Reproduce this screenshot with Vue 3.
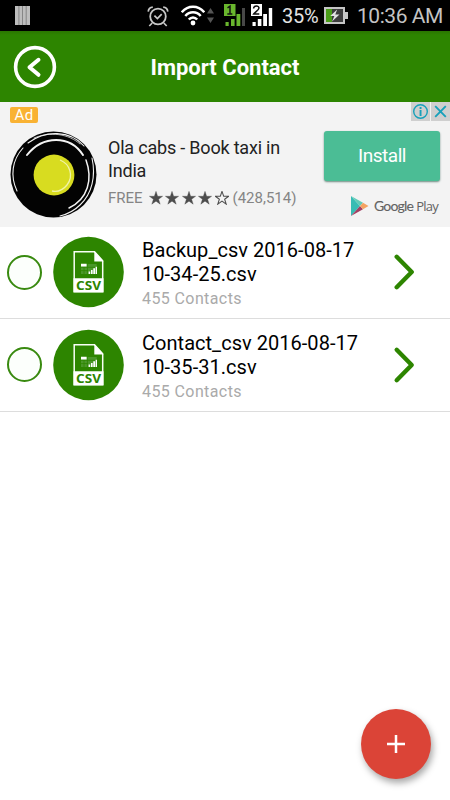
<script setup>
const files = [
  { name: ['Backup_csv 2016-08-17', '10-34-25.csv'], count: '455 Contacts' },
  { name: ['Contact_csv 2016-08-17', '10-35-31.csv'], count: '455 Contacts' }
]
const star = 'M8 .4 9.9 6h5.7l-4.6 3.4 1.8 5.6L8 11.6 3.2 15 5 9.4.4 6h5.7z'
</script>

<template>
  <div class="screen">
    <div class="status">
      <svg class="bars" width="15" height="19" viewBox="0 0 15 19">
        <path fill="#bdbdbd" d="M0 0h15v19H0z" />
        <path stroke="#777" stroke-width=".8" d="M3.9 0v19M7.5 0v19M11.2 0v19" />
      </svg>
      <svg class="alarm" width="22" height="21" viewBox="0 0 22 21" fill="none" stroke="#c6c6c6">
        <circle cx="11" cy="10.5" r="7.8" stroke-width="1.8" />
        <path stroke-width="1.7" d="m7.4 9.6 3 3 4.3-4.4M1.2 5.6C1.5 3 3.2 1.4 5.8 1.2M20.8 5.6C20.5 3 18.8 1.4 16.2 1.2M5.2 17 2.3 20M16.8 17l2.9 3" />
      </svg>
      <svg class="wifi" width="24" height="21" viewBox="0 0 24 21" fill="none" stroke="#fff" stroke-width="2.5">
        <path d="M.8 7.3C7-.1 17-.1 23.2 7.3M4.3 11c4.3-5 11.1-5 15.4 0M7.8 14.5c2.4-2.8 6-2.8 8.4 0" />
        <circle cx="12" cy="18" r="2.4" fill="#fff" stroke="none" />
      </svg>
      <svg class="updown" width="7" height="15" viewBox="0 0 7 15" fill="#555">
        <path d="M0 5.5 3.5 0 7 5.5zM0 9.5h7L3.5 15z" />
      </svg>
      <svg class="sim" width="22" height="23" viewBox="0 0 22 23">
        <path fill="#69b62d" d="M0 0h11.5v12H0zM1.5 18h3.2v4H1.5zM7 15h3.6v7H7zM12.5 10h3.8v12h-3.8z" />
        <path fill="#484848" d="M18 4h3v18h-3z" />
        <path fill="none" stroke="#111" stroke-width="1.5" d="M3.5 3.8 6 2.2V10M3.3 10h5" />
      </svg>
      <svg class="sim2" width="22" height="23" viewBox="0 0 22 23">
        <path fill="#fff" d="M0 0h11v12H0zM1.5 18h3.2v4H1.5zM6.8 15h3.6v7H6.8zM12.2 10H16v12h-3.8zM17.8 4h3.4v18h-3.4z" />
        <path fill="none" stroke="#111" stroke-width="1.5" d="M2.6 4.5C3 1 8 1.5 8 4c0 2-4 4-5.3 6h5.6" />
      </svg>
      <span class="percent">35%</span>
      <svg class="battery" width="24" height="17" viewBox="0 0 24 17">
        <path fill="#c5c5c5" d="M0 0h21v5h3v7h-3v5H0z" />
        <path fill="#3d3d3d" d="M2 2h17v13H2z" />
        <path fill="#4a9d18" d="M2 2h6v13H2z" />
        <path fill="#e2e2e2" d="m13.2 2.5-7 6.5h4.2L8 14.5l7.5-7h-4.2z" />
      </svg>
      <span class="time">10:36 AM</span>
    </div>

    <header class="header">
      <svg class="back" width="44" height="44" viewBox="0 0 44 44" fill="none" stroke="#fff" stroke-linecap="round" stroke-linejoin="round">
        <circle cx="22" cy="22" r="19.4" stroke-width="3.6" />
        <path stroke-width="4" d="m25.5 14.8-9 7.5 9 7.5" />
      </svg>
      <h1 class="title">Import Contact</h1>
    </header>

    <section class="ad">
      <div class="ad-left">
        <span class="ad-tag">Ad</span>
        <svg class="ola" width="88" height="88" viewBox="0 0 88 88">
          <circle cx="43.5" cy="43.5" r="43" fill="#030303" />
          <g fill="none" stroke="#f3f3f3" stroke-linecap="round">
            <path stroke-width="1.1" d="M13 17C2 29 0 45 7 60M18 12C35-1 60-1 74 15" />
            <path stroke-width=".7" d="M24 7C40 0 59 3 70 13" />
            <path stroke-width="2" d="M17 24C33 4 60 4 73 24" />
            <path stroke-width="1.5" d="M76 29c7 19 2 39-17 48" />
            <path stroke-width="1.1" d="M82 27c4 18 0 36-12 47-6 6-12 9-20 11" />
          </g>
          <circle cx="44" cy="44" r="20.4" fill="#d8dc20" />
          <path fill="none" stroke="#f1f3a8" stroke-width="1.3" d="M50 29c10 4 14 16 7 25-4 5-10 7-15 6" />
        </svg>
      </div>
      <div class="ad-copy">
        <div class="ad-title">Ola cabs - Book taxi in<br>India</div>
        <div class="rating">
          <span class="free">FREE</span>
          <svg v-for="n in 5" :key="n" class="star" :class="{ hollow: n === 5 }" width="14" height="14" viewBox="0 0 16 16"><path :d="star" /></svg>
          <span class="reviews">(428,514)</span>
        </div>
      </div>
      <div class="ad-right">
        <div class="ad-controls">
          <svg width="19" height="19" viewBox="0 0 19 19">
            <path fill="#cfcfcf" d="M0 0h19v19H0z" />
            <circle cx="9.5" cy="9.5" r="6.8" fill="none" stroke="#17a0ba" stroke-width="1.4" />
            <path fill="#17a0ba" d="M8.6 5h1.9v1.9H8.6zM8.6 8h1.9v6H8.6z" />
          </svg>
          <svg width="19" height="19" viewBox="0 0 19 19">
            <path fill="#cfcfcf" d="M0 0h19v19H0z" />
            <path stroke="#17a0ba" stroke-width="1.9" d="m4.2 4.2 10.6 10.6M14.8 4.2 4.2 14.8" />
          </svg>
        </div>
        <button class="install">Install</button>
        <div class="play">
          <svg width="19" height="22" viewBox="0 0 19 22">
            <path fill="#38bcb4" d="M1 1v20l9-10z" />
            <path fill="#62ccb8" d="m1 1 9 10 3-3.3z" />
            <path fill="#a34063" d="m1 21 9-10 3 3.3z" />
            <path fill="#f4a362" d="m10 11 3-3.3L18.5 11 13 14.3z" />
          </svg>
          <span class="google">Google</span><span class="store">Play</span>
        </div>
      </div>
    </section>

    <main>
      <div v-for="file in files" :key="file.name[0]" class="row">
        <span class="radio"></span>
        <svg class="csv" width="72" height="72" viewBox="0 0 72 72">
          <circle cx="35.5" cy="36" r="35.3" fill="#2d8500" />
          <path fill="#2d8500" stroke="#f8fff5" stroke-width="1.5" d="M21.2 15.7h20.3l8.2 9v31H21.2z" />
          <path fill="#fff" d="M41.3 15v10.5h9.2zM20.5 42.3h30v14h-30z" />
          <path fill="#4b972a" d="M28 28h15.7v10H28z" />
          <path fill="none" stroke="#2d8500" stroke-width=".8" d="M28 31.3h15.7M28 34.6h7M31 31v7M34.4 28v10" />
          <path fill="#fff" d="M28 27.8h5.6v2.6H28zM35.6 35.5h1.6v2.5h-1.6zM38 34h1.6v4H38zM40.3 32.3H42V38h-1.7zM42.6 30.8h1.4V38h-1.4z" />
          <text class="csv-text" x="35.5" y="54.2" text-anchor="middle" textLength="25" lengthAdjust="spacingAndGlyphs">CSV</text>
        </svg>
        <div class="info">
          <div class="name">{{ file.name[0] }}<br>{{ file.name[1] }}</div>
          <div class="count">{{ file.count }}</div>
        </div>
        <svg class="chevron" width="22" height="38" viewBox="0 0 22 38">
          <path fill="none" stroke="#2d8500" stroke-width="4.4" stroke-linecap="round" stroke-linejoin="round" d="m3.7 3.8 15 15.2-15 15.2" />
        </svg>
      </div>
    </main>

    <button class="fab" aria-label="Add">
      <svg width="20" height="20" viewBox="0 0 20 20"><path stroke="#fff" stroke-width="2.5" d="M10 1v18M1 10h18" /></svg>
    </button>
  </div>
</template>

<style>
body { margin: 0; background: #fff; }
</style>

<style scoped>
.screen { position: relative; width: 450px; height: 800px; overflow: hidden; background: #fff; font-family: Roboto, sans-serif; }
svg { display: block; flex: none; }
button { border: 0; padding: 0; font-family: inherit; }
.status { display: flex; align-items: flex-start; height: 31px; background: #000; white-space: nowrap; }
.bars { margin: 6px 0 0 15px; }
.alarm { margin: 6px 0 0 117px; }
.wifi { margin: 5px 0 0 12px; }
.updown { margin: 8px 0 0 2px; }
.sim { margin: 4px 0 0 10px; }
.sim2 { margin: 4px 0 0 5px; }
.percent { width: 38px; margin: 4px 0 0 9px; color: #e3e3e3; font-size: 20px; line-height: 24px; letter-spacing: -.3px; }
.battery { margin: 7px 0 0 4px; }
.time { margin: 4px 0 0 9px; color: #c4c4c4; font-size: 21px; line-height: 24px; letter-spacing: -.45px; }
.header { display: grid; grid-template-columns: 71px 1fr 71px; align-items: center; height: 71px; background: linear-gradient(#2a7600, #2d8500 4px); }
.back { margin-left: 13px; }
.title { margin: 3px 0 0; color: #fff; font-size: 22px; font-weight: 700; line-height: 28px; white-space: nowrap; text-align: center; }
.ad { display: flex; box-sizing: border-box; height: 125px; background: #f3f3f3; }
.ad-left { width: 108px; box-sizing: border-box; padding: 5px 0 0 10px; }
.ad-tag { display: block; width: 28px; height: 16px; border-radius: 2px; background: #f9b233; color: #fff; font-size: 15px; line-height: 17px; text-align: center; letter-spacing: .3px; }
.ola { margin-top: 8px; }
.ad-copy { width: 215px; padding-top: 34px; color: #222; }
.ad-title { font-size: 18px; line-height: 23px; white-space: nowrap; letter-spacing: -.2px; }
.rating { display: flex; align-items: center; height: 18px; margin-top: 7px; color: #858585; font-size: 15px; line-height: 18px; }
.free { width: 40.5px; }
.star { margin-right: 2.5px; fill: #4d4d4d; stroke: #4d4d4d; stroke-width: .4; }
.hollow { fill: none; stroke-width: 1.2; }
.reviews { margin-left: 1.5px; }
.ad-right { width: 127px; }
.ad-controls { display: flex; justify-content: flex-end; gap: 1px; height: 19px; }
.install { display: block; width: 116px; height: 50px; margin: 10px 0 0 1px; border-radius: 3px; background: #4bbd95; color: #fff; font-size: 19px; line-height: 50px; letter-spacing: -.5px; box-shadow: 0 1px 2px #6c8b80; }
.play { display: flex; align-items: center; height: 24px; margin: 13px 0 0 27px; color: #626262; line-height: 20px; }
.google { margin-left: 5px; font-family: Lato, sans-serif; font-size: 14px; letter-spacing: -.8px; -webkit-text-stroke: .1px #626262; }
.store { margin-left: 3px; font-family: "Open Sans", sans-serif; font-size: 13px; letter-spacing: -.75px; }
.row { display: flex; align-items: flex-start; box-sizing: border-box; height: 92px; border-bottom: 1px solid #ddd; }
.row + .row { height: 93px; padding-top: 1px; }
.radio { flex: none; box-sizing: border-box; width: 35px; height: 35px; margin: 28px 0 0 7px; border: 2px solid #398a10; border-radius: 50%; background: #fcfffc; }
.row + .row .radio { margin-top: 27px; }
.csv { margin: 9px 0 0 11px; }
.csv-text { fill: #2d8500; font: 700 13px "Open Sans", sans-serif; }
.info { width: 248px; margin: 11px 0 0 17px; }
.row + .row .name { margin-top: -.5px; }
.name { color: #000; font-size: 20px; line-height: 24px; white-space: nowrap; letter-spacing: .03px; }
.count { margin-top: 3px; color: #aaa; font-size: 16px; line-height: 20px; letter-spacing: .4px; }
.chevron { margin: 26px 0 0 3px; }
.fab { position: absolute; left: 361px; top: 709px; display: flex; align-items: center; justify-content: center; width: 70px; height: 70px; border-radius: 50%; background: #db4437; box-shadow: 2px 4px 7px rgba(0, 0, 0, .35); }
</style>
